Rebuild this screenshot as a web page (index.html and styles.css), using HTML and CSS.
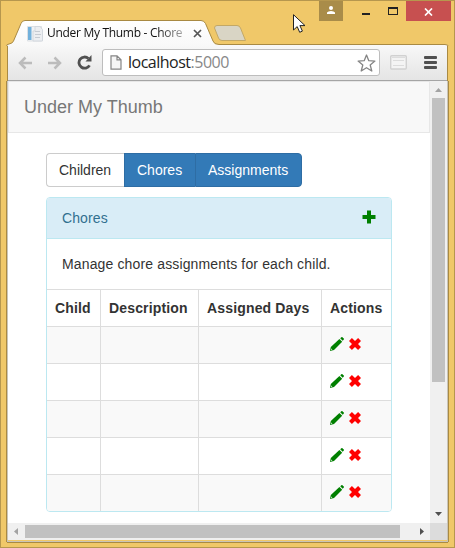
FILE: index.html
```html
<!DOCTYPE html>
<html lang="en">
<head>
<meta charset="utf-8">
<title>Under My Thumb - Chores</title>
<link rel="stylesheet" href="styles.css">
</head>
<body>
<svg class="defs" width="0" height="0" aria-hidden="true">
  <symbol id="pencil" viewBox="0 0 14 14"><path d="M0 14 .8 9.900 9.400 1.900 12.200 4.700 4 13Z"/><path d="m10.200 1.300 1.200-1.100q.5-.5 1 0l1.400 1.400q.4.500 0 1l-1.100 1.200Z"/><path d="m.9 13.100.4-1.600 1.100 1.100Z" fill="#eef5ee"/></symbol>
  <symbol id="remove" viewBox="0 0 12 12"><path d="M0 2.900 2.900 0 6 3 9.100 0 12 2.900 9 6 12 9.100 9.100 12 6 9 2.900 12 0 9.100 3 6Z"/></symbol>
</svg>
<div class="window">
  <header class="titlebar">
    <svg class="frame" width="455" height="46" viewBox="0 0 455 46">
      <defs>
        <linearGradient id="tabfill" x1="0" y1="0" x2="0" y2="1"><stop offset="0" stop-color="#fff"/><stop offset="1" stop-color="#f8f8f8"/></linearGradient>
      </defs>
      <path d="M214.500 28Q214.500 25.500 217 25.500H237Q239.500 25.500 240.500 28L245.500 40.500H222Q219.500 40.500 218.500 38Z" fill="#d9d5c5" stroke="#c3a866"/>
      <path d="M6.500 46.500Q6.500 44 9 44 12.500 43.500 13.500 41L21 23.500Q22 20.500 25 20.500H201Q204 20.500 205.500 23.500L213 41Q214 44.500 219 44.500H445Q448.500 44.500 448.500 47Z" fill="url(#tabfill)" stroke="#a98a43"/>
    </svg>
    <div class="tab">
      <svg class="favicon" width="17" height="17" viewBox="0 0 17 17"><path d="M.5 1.500H14.500V16H.5Z" fill="#f1f3f5" stroke="#dce0e4"/><path d="M1 2h3.500v13H1z" fill="#72b1dc"/><path d="M8 1.500h5l2.500 3V16H6V6h2Z" fill="#eceef1" stroke="#d3d8de"/><path d="M8 6.500h5M8 9.500h6M8 12.500h5" stroke="#c6cbd2"/></svg>
      <span class="tab-title">Under My Thumb - Chore</span>
      <svg class="tab-close" width="9" height="9" viewBox="0 0 9 9"><path d="m1 1 7 7M8 1 1 8" stroke="#555" stroke-width="1.7"/></svg>
    </div>
    <svg class="pointer" width="13" height="20" viewBox="0 0 13 20"><path d="M.5.700V16l3.700-3.400 2.500 5.700 2.700-1.200-2.500-5.500H12Z" fill="#fff" stroke="#222"/></svg>
    <div class="controls">
      <span class="user"><svg width="8" height="9" viewBox="0 0 8 9"><circle cx="4" cy="2" r="2" fill="#fff"/><path d="M0 8V6.500Q1 5 4 5t4 1.500V8Z" fill="#fff"/></svg></span>
      <span class="min"></span>
      <span class="max"></span>
      <span class="close"><svg width="9" height="8" viewBox="0 0 9 8"><path d="m1 .5 7 7M8 .5l-7 7" stroke="#fff" stroke-width="1.700"/></svg></span>
    </div>
  </header>
  <div class="toolbar">
    <svg class="back" width="15" height="14" viewBox="0 0 15 14"><path d="M14 7H2M7.500 1.500 2 7l5.500 5.500" fill="none" stroke="#bcbcbc" stroke-width="2.500"/></svg>
    <svg class="fwd" width="15" height="14" viewBox="0 0 15 14"><path d="M1 7h12M7.500 1.500 13 7l-5.500 5.500" fill="none" stroke="#bcbcbc" stroke-width="2.500"/></svg>
    <svg class="reload" width="15" height="15" viewBox="0 0 15 15"><path d="M12.500 10.300A5.600 5.600 0 1 1 11.400 3.500" fill="none" stroke="#505050" stroke-width="2.800"/><path d="M14.500 0v6.500H8.500Z" fill="#505050"/></svg>
    <div class="address">
      <svg class="doc" width="12" height="15" viewBox="0 0 12 15"><path d="M1 .8h6l4 4V14.200H1ZM7 .8v4h4" fill="#f5f5f5" stroke="#858585" stroke-width="1.200"/></svg>
      <span class="url">localhost<span class="port">:5000</span></span>
      <svg class="star" width="19" height="18" viewBox="0 0 19 18"><path d="m9.500 1 2.300 5.700 6.100.4-4.700 3.900 1.600 6-5.300-3.300L4.200 17l1.600-6L1.100 7.100l6.100-.4Z" fill="#fff" stroke="#858585" stroke-width="1.300" stroke-linejoin="round"/></svg>
    </div>
    <svg class="ext" width="17" height="15" viewBox="0 0 17 15"><rect x=".7" y=".7" width="15.600" height="13.300" rx="1" fill="#f4f4f4" stroke="#d1d1d1" stroke-width="1.400"/><path d="M2 2.500h13" stroke="#ddd"/><path d="M3 5.500h11M3 10.500h11" stroke="#dcdcdc"/></svg>
    <div class="menu"><i></i><i></i><i></i></div>
  </div>
  <div class="viewport">
    <main class="page">
      <nav class="navbar">Under My Thumb</nav>
      <div class="btn-group">
        <span class="btn btn-default">Children</span><span class="btn btn-primary">Chores</span><span class="btn btn-primary last">Assignments</span>
      </div>
      <section class="panel">
        <div class="panel-heading">Chores
          <svg width="14" height="14" viewBox="0 0 14 14"><path d="M5 .5h4V5h4.500v4H9v4.500H5V9H.5V5H5Z" fill="green"/></svg>
        </div>
        <div class="panel-body">Manage chore assignments for each child.</div>
        <table>
          <thead><tr><th class="c1">Child</th><th class="c2">Description</th><th class="c3">Assigned Days</th><th>Actions</th></tr></thead>
          <tbody>
            <tr><td></td><td></td><td></td><td><div class="actions"><svg class="edit"><use href="#pencil"/></svg><svg class="del"><use href="#remove"/></svg></div></td></tr>
            <tr><td></td><td></td><td></td><td><div class="actions"><svg class="edit"><use href="#pencil"/></svg><svg class="del"><use href="#remove"/></svg></div></td></tr>
            <tr><td></td><td></td><td></td><td><div class="actions"><svg class="edit"><use href="#pencil"/></svg><svg class="del"><use href="#remove"/></svg></div></td></tr>
            <tr><td></td><td></td><td></td><td><div class="actions"><svg class="edit"><use href="#pencil"/></svg><svg class="del"><use href="#remove"/></svg></div></td></tr>
            <tr><td></td><td></td><td></td><td><div class="actions"><svg class="edit"><use href="#pencil"/></svg><svg class="del"><use href="#remove"/></svg></div></td></tr>
          </tbody>
        </table>
      </section>
    </main>
    <div class="vscroll">
      <svg width="7" height="4" viewBox="0 0 7 4"><path d="M0 4 3.500 0 7 4Z" fill="#a3a3a3"/></svg>
      <div class="vthumb"></div>
      <svg class="down" width="7" height="4" viewBox="0 0 7 4"><path d="M0 0 3.500 4 7 0Z" fill="#505050"/></svg>
    </div>
    <div class="hscroll">
      <svg width="4" height="7" viewBox="0 0 4 7"><path d="M4 0 0 3.500 4 7Z" fill="#a3a3a3"/></svg>
      <div class="hthumb"></div>
      <svg class="right" width="4" height="7" viewBox="0 0 4 7"><path d="M0 0 4 3.500 0 7Z" fill="#505050"/></svg>
    </div>
    <div class="corner"></div>
  </div>
</div>
</body>
</html>
```
FILE: styles.css
```css
* { box-sizing: border-box; }
body { margin: 0; overflow: hidden; font: 14px/20px "Liberation Sans", Arial, sans-serif; color: #333; }
svg { display: block; flex: none; }
.defs { position: absolute; }
.window { width: 455px; height: 548px; background: #f0c869; box-shadow: inset 0 0 0 1px #b6974e; display: flex; flex-direction: column; }

.titlebar { position: relative; height: 45px; display: flex; flex: none; }
.frame { position: absolute; left: 0; top: 0; }
.tab { position: relative; display: flex; width: 204px; height: 24px; margin-top: 21px; padding-left: 27px; }
.favicon { margin-top: 4px; }
.tab-title { width: 138px; margin-left: 3px; font: 12px/24px "Open Sans", "Noto Sans", sans-serif; letter-spacing: -0.3px; white-space: nowrap; overflow: hidden; color: #111; -webkit-mask-image: linear-gradient(90deg, #000 110px, rgba(0,0,0,.3) 138px); mask-image: linear-gradient(90deg, #000 110px, rgba(0,0,0,.3) 138px); }
.tab-close { margin: 8px 0 0 8px; }
.pointer { position: absolute; left: 293px; top: 14px; }
.controls { position: relative; display: flex; margin-left: auto; margin-right: 4px; padding-top: 1px; height: 21px; }
.user { width: 24px; background: #a98c49; padding: 5px 0 0 8px; }
.min { width: 8px; height: 2px; background: #222; margin: 12px 0 0 19px; }
.max { width: 10px; height: 8px; border: 1px solid #222; border-top-width: 2px; margin: 6px 8px 0 18px; }
.close { width: 45px; background: #c75050; padding: 7px 0 0 18px; }

.toolbar { display: flex; flex: none; height: 36px; margin: 0 7px; background: linear-gradient(#f8f8f8, #e4e4e4); border: 1px solid #a98a43; border-width: 0 1px; box-shadow: inset 0 -1px #a5a5a5; }
.back { margin: 11px 0 0 10px; }
.fwd { margin: 11px 0 0 14px; }
.reload { margin: 10px 0 0 15px; }
.address { display: flex; width: 278px; height: 27px; margin: 4px 0 0 10px; padding: 0 3px 0 7px; background: #fff; border: 1px solid #bdbdbd; border-radius: 3px; }
.doc { margin-top: 5px; }
.url { margin-left: 6px; font: 16px/25px "Open Sans", "Noto Sans", sans-serif; letter-spacing: -0.5px; color: #222; }
.port { color: #888; }
.star { margin: 4px 0 0 auto; }
.ext { margin: 10px 0 0 10px; }
.menu { display: flex; flex-direction: column; gap: 2px; width: 13px; margin: 11px 0 0 17px; }
.menu i { height: 3px; background: #505050; border-radius: 1px; }

.viewport { display: grid; flex: none; grid-template: 442px 17px / 422px 17px; width: 441px; height: 461px; margin-left: 7px; border: 1px solid #c9c4b8; border-top: 0; box-shadow: 0 1px #a98a43, 1px 0 #a98a43, -1px 0 #a98a43; }
.page { background: #fff; overflow: hidden; }
.navbar { height: 52px; padding: 0 15px; font-size: 18px; line-height: 50px; color: #777; background: #f8f8f8; border: 1px solid #e7e7e7; }
.btn-group { display: flex; height: 34px; margin: 20px 0 10px 38px; }
.btn { display: block; height: 34px; padding: 6px 12px; border: 1px solid #2e6da4; }
.btn-default { width: 78px; color: #333; border-color: #ccc; border-right: 0; border-radius: 4px 0 0 4px; }
.btn-primary { width: 71px; background: #337ab7; color: #fff; border-right: 0; }
.last { width: 107px; border-right: 1px solid #2e6da4; border-radius: 0 4px 4px 0; }
.panel { width: 346px; height: 315px; margin-left: 38px; border: 1px solid #bce8f1; border-radius: 4px; overflow: hidden; }
.panel-heading { display: flex; justify-content: space-between; height: 41px; padding: 10px 15px; color: #31708f; letter-spacing: .1px; background: #d9edf7; border-bottom: 1px solid #bce8f1; }
.panel-heading svg { margin-top: 2px; }
.panel-body { height: 50px; padding: 15px; letter-spacing: .14px; }
table { width: 344px; table-layout: fixed; border-collapse: separate; border-spacing: 0; border-top: 1px solid #ddd; }
th, td { height: 37px; padding: 8px; text-align: left; vertical-align: top; border-right: 1px solid #ddd; border-bottom: 1px solid #ddd; white-space: nowrap; }
th { letter-spacing: .16px; }
th:last-child, td:last-child { border-right: 0; }
tr:last-child td { border-bottom: 0; }
thead tr th { border-bottom: 1px solid #ddd; }
tbody tr:nth-child(odd) { background: #f9f9f9; }
.c1 { width: 54px; }
.c2 { width: 98px; }
.c3 { width: 123px; }
.actions { display: flex; height: 20px; gap: 5px; padding-top: 2px; }
.edit { width: 14px; height: 14px; fill: green; }
.del { width: 12px; height: 12px; margin-top: 1px; fill: red; }

.vscroll, .hscroll { display: flex; background: #f0f0f0; }
.vscroll { flex-direction: column; align-items: center; padding: 7px 0 7px; }
.vthumb { width: 13px; height: 284px; margin-top: 6px; background: #c1c1c1; }
.down { margin-top: auto; }
.hscroll { align-items: center; padding: 0 6px; }
.hthumb { width: 375px; height: 13px; margin-left: 7px; background: #c1c1c1; }
.right { margin-left: auto; }
.corner { background: #dcdcdc; }
```
